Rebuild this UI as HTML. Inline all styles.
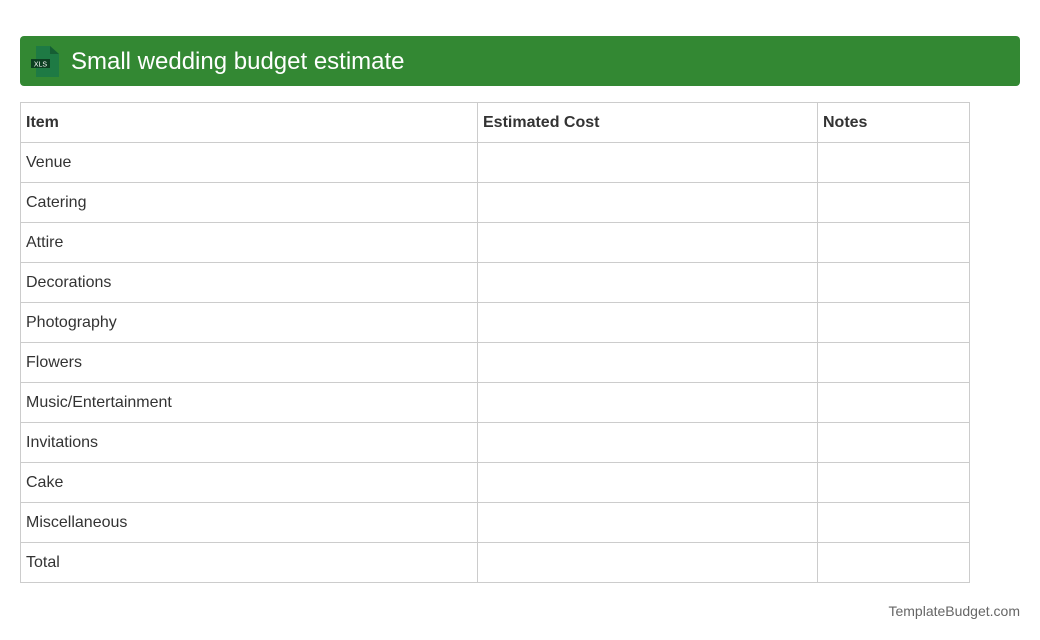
<!DOCTYPE html>
<html><head><style>
body{margin:0;width:1040px;height:640px;background:#fff;font-family:"Liberation Sans",Arial,sans-serif;position:relative}
.hdr{position:absolute;left:20px;top:36px;width:1000px;height:50px;background:#338833;border-radius:4px}
.hdr span{position:absolute;left:51px;top:12px;font-size:24px;color:#fff}
table{position:absolute;left:20px;top:102px;border-collapse:collapse;width:950px}
td{border:1px solid #ccc;height:39px;padding:0 0 0 5px;font-size:16px;color:#333}
tr:first-child td{font-weight:bold}
.ft{position:absolute;right:20px;top:603px;font-size:14px;color:#666}
</style></head><body>
<div class="hdr">
<svg style="position:absolute;left:10px;top:10px" width="30" height="31" viewBox="0 0 30 31">
<path d="M6 0H20L29 8V31H6Z" fill="#1e7a44"/><path d="M20 0V8H29Z" fill="#155e33"/>
<rect x="1" y="13" width="19" height="9" fill="#0d3f22"/>
<text x="10.5" y="20.5" font-size="7" fill="#fff" text-anchor="middle" font-family="Liberation Sans">XLS</text>
</svg>
<span>Small wedding budget estimate</span></div>
<table>
<tr><td style="width:451px">Item</td><td style="width:334px">Estimated Cost</td><td>Notes</td></tr>
<tr><td>Venue</td><td></td><td></td></tr>
<tr><td>Catering</td><td></td><td></td></tr>
<tr><td>Attire</td><td></td><td></td></tr>
<tr><td>Decorations</td><td></td><td></td></tr>
<tr><td>Photography</td><td></td><td></td></tr>
<tr><td>Flowers</td><td></td><td></td></tr>
<tr><td>Music/Entertainment</td><td></td><td></td></tr>
<tr><td>Invitations</td><td></td><td></td></tr>
<tr><td>Cake</td><td></td><td></td></tr>
<tr><td>Miscellaneous</td><td></td><td></td></tr>
<tr><td>Total</td><td></td><td></td></tr>
</table>
<div class="ft">TemplateBudget.com</div>
</body></html>
